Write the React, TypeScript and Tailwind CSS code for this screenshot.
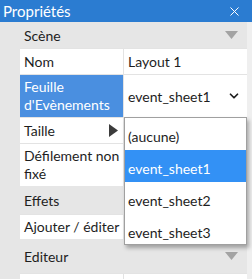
import { ChevronDown, X } from "lucide-react";

const font = { fontFamily: 'Lato, "Open Sans", sans-serif' };

function Section({ label, h }: { label: string; h: string }) {
  return (
    <div className={`flex items-center justify-between bg-[#e6e6e6] pl-[24px] pr-[9px] ${h}`}>
      <span>{label}</span>
      <svg width="13" height="8" viewBox="0 0 13 8" className="shrink-0">
        <polygon points="0,0 13,0 6.5,8" fill="#a3a3a3" />
      </svg>
    </div>
  );
}

function Row({
  label,
  value,
  h,
  arrow,
  selected,
  children,
}: {
  label: React.ReactNode;
  value?: React.ReactNode;
  h: string;
  arrow?: boolean;
  selected?: boolean;
  children?: React.ReactNode;
}) {
  return (
    <div className={`flex ml-[20px] border-t border-[#e3e3e3] overflow-hidden ${h}`}>
      <div
        className={`w-[103px] shrink-0 flex items-center justify-between pl-[4px] pr-[5px] leading-[18px] ${
          selected ? "bg-[#4a8fe0] text-white" : "bg-white"
        }`}
      >
        <span className="whitespace-nowrap">{label}</span>
        {arrow && (
          <svg width="9" height="13" viewBox="0 0 9 13" className="shrink-0">
            <polygon points="0,0 9,6.5 0,13" fill="#3c3c3c" />
          </svg>
        )}
      </div>
      <div className="flex-1 flex items-center bg-white border-l border-[#e3e3e3] pl-[4px]">
        {value}
        {children}
      </div>
    </div>
  );
}

export default function App() {
  return (
    <div
      className="relative w-[252px] h-[279px] overflow-hidden bg-[#e6e6e6] text-[14px] text-[#1e1e1e]"
      style={font}
    >
      <div className="h-[22px] bg-[#2b7cd1] flex items-center justify-between pl-[3px] pr-[10px] text-white text-[15px]">
        <span>Propriétés</span>
        <X size={15} strokeWidth={1.6} />
      </div>
      <div className="flex">
        <div className="w-[247px]">
          <Section label="Scène" h="h-[26px]" />
          <Row label="Nom" value="Layout 1" h="h-[26px]" />
          <Row
            label={
              <>
                Feuille
                <br />
                d'Evènements
              </>
            }
            h="h-[43px]"
            selected
          >
            <div className="flex-1 flex items-center justify-between pr-[6px]">
              <span>event_sheet1</span>
              <ChevronDown size={14} strokeWidth={3} />
            </div>
          </Row>
          <Row label="Taille" h="h-[26px]" arrow />
          <Row
            label={
              <>
                Défilement non
                <br />
                fixé
              </>
            }
            h="h-[43px]"
          />
          <Section label="Effets" h="h-[28px]" />
          <Row label="Ajouter / éditer" h="h-[25px]" />
          <Section label="Editeur" h="h-[34px]" />
          <Row label="Marges" value="500 x 500" h="h-[26px]" arrow />
        </div>
        <div className="flex-1 bg-[#efefef]" />
      </div>

      {/* open select list */}
      <div className="absolute left-[124px] top-[117px] w-[123px] h-[128px] bg-white border border-[#a0a0a0] shadow-[2px_3px_4px_rgba(0,0,0,0.3)]">
        {["(aucune)", "event_sheet1", "event_sheet2", "event_sheet3"].map((o, i) => (
          <div
            key={o}
            className={`h-[32px] flex items-center pl-[3px] pt-[5px] ${
              i === 1 ? "bg-[#3391f5] text-white" : ""
            }`}
          >
            {o}
          </div>
        ))}
      </div>
    </div>
  );
}
